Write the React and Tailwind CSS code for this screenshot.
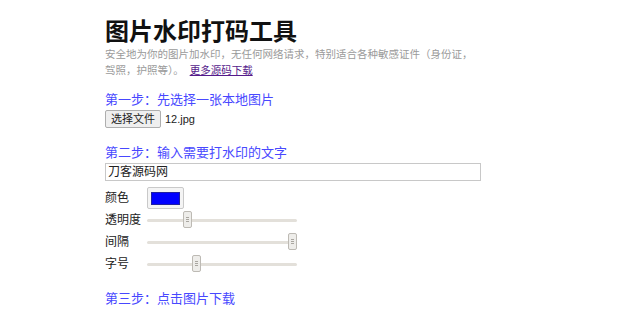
const font = "font-['Liberation_Sans','Noto_Sans_CJK_SC',sans-serif]";

function Slider({ pos }) {
  return (
    <div className="relative w-[150px] h-[22px] flex items-center">
      <div className="w-full h-[3px] bg-[#e3e0da] rounded-sm" />
      <div
        className="absolute top-[2px] w-[9px] h-[17px] bg-[#eeedea] border border-[#bdbab4] rounded-[2px] flex flex-col items-center justify-center gap-[1px]"
        style={{ left: pos - 4 }}
      >
        <span className="w-[3px] h-px bg-[#a9a6a0]" />
        <span className="w-[3px] h-px bg-[#a9a6a0]" />
        <span className="w-[3px] h-px bg-[#a9a6a0]" />
      </div>
    </div>
  );
}

function Row({ label, children }) {
  return (
    <div className="flex items-center h-[22px]">
      <div className="w-[42px] text-[12px] text-[#222]">{label}</div>
      {children}
    </div>
  );
}

export default function App() {
  return (
    <div className={`w-[622px] h-[309px] bg-white overflow-hidden pt-[18px] pl-[105px] ${font}`}>
      <div className="w-[376px]">
        <h1 className="text-[24px] leading-[28px] font-bold text-[#111]">图片水印打码工具</h1>
        <p className="text-[10.5px] leading-[16px] text-[#9a9a9a]">
          安全地为你的图片加水印，无任何网络请求，特别适合各种敏感证件（身份证，驾照，护照等）。{" "}
          <a href="#" className="ml-[3px] text-[#551a8b] underline">更多源码下载</a>
        </p>

        <div className="mt-[14px] text-[13px] leading-[16px] text-[#4848ff]">第一步：先选择一张本地图片</div>
        <div className="mt-[2px] flex items-center h-[18px] gap-[4px]">
          <button className="h-[18px] px-[5px] text-[11px] leading-none text-[#222] bg-[#efefef] border border-[#aeaeae] rounded-[2px]">选择文件</button>
          <span className="text-[11px] text-[#222]">12.jpg</span>
        </div>

        <div className="mt-[17px] text-[13px] leading-[16px] text-[#4848ff]">第二步：输入需要打水印的文字</div>
        <div className="mt-[2px] h-[18px] border border-[#c8c8c8] flex items-center px-[2px] text-[12px] text-[#222]">刀客源码网</div>

        <div className="mt-[6px]">
          <Row label="颜色">
            <div className="w-[37px] h-[22px] border border-[#c9c9c9] bg-[#f4f4f4] rounded-[2px] flex items-center justify-center">
              <div className="w-[29px] h-[13px] bg-[#0000ff] border border-[#2020a0]" />
            </div>
          </Row>
          <Row label="透明度"><Slider pos={40} /></Row>
          <Row label="间隔"><Slider pos={145} /></Row>
          <Row label="字号"><Slider pos={49} /></Row>
        </div>

        <div className="mt-[16px] text-[13px] leading-[16px] text-[#4848ff]">第三步：点击图片下载</div>
      </div>
    </div>
  );
}
